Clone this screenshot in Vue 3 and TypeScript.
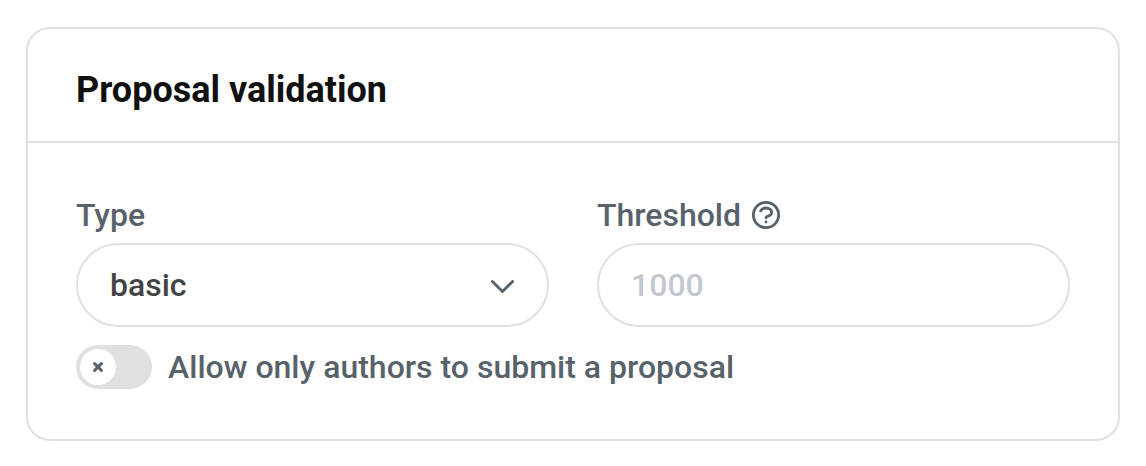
<script setup lang="ts">
import { ref } from 'vue'

const validation = ref('basic')
const threshold = ref('')
const authorsOnly = ref(false)
</script>

<template>
  <main class="page">
    <section class="card">
      <header class="card-header">
        <h1>Proposal validation</h1>
      </header>
      <div class="card-body">
        <div class="fields">
          <div class="field">
            <div class="label-row">
              <label class="label" for="type">Type</label>
            </div>
            <div class="select-wrap">
              <select id="type" v-model="validation" class="control">
                <option value="basic">basic</option>
              </select>
              <svg class="chevron" viewBox="4 8 16 9" aria-hidden="true">
                <path d="M19 9l-7 7-7-7" />
              </svg>
            </div>
          </div>
          <div class="field">
            <div class="label-row">
              <label class="label" for="threshold">Threshold</label>
              <svg class="help" viewBox="1.3 1.3 21.4 21.4" aria-hidden="true">
                <path
                  d="M8.228 9c.549-1.165 2.03-2 3.772-2 2.21 0 4 1.343 4 3 0 1.4-1.278 2.575-3.006 2.907-.542.104-.994.54-.994 1.093m0 3h.01M21 12a9 9 0 11-18 0 9 9 0 0118 0z"
                />
              </svg>
            </div>
            <input id="threshold" v-model="threshold" class="control" type="text" placeholder="1000" />
          </div>
        </div>
        <label class="toggle">
          <input v-model="authorsOnly" class="toggle-input" type="checkbox" role="switch" />
          <span class="track">
            <span class="knob">
              <svg viewBox="0 0 12 12" aria-hidden="true"><path d="M2.6 2.6l6.8 6.8M9.4 2.6l-6.8 6.8" /></svg>
            </span>
          </span>
          <span class="toggle-text">Allow only authors to submit a proposal</span>
        </label>
      </div>
    </section>
  </main>
</template>

<style>
body {
  background: #fff;
}
</style>

<style scoped>
* {
  box-sizing: border-box;
}
.page {
  padding: 27px 26px 25px;
  font-family: Roboto, 'Liberation Sans', sans-serif;
  color: #58626b;
}
.card {
  border: 2px solid #e0e0e0;
  border-radius: 24px;
}
.card-header {
  padding: 37px 48px 27px;
  border-bottom: 2px solid #e0e0e0;
}
h1 {
  margin: 0;
  font-size: 36px;
  line-height: 48px;
  font-weight: 700;
  color: #111;
}
.card-body {
  padding: 48px 48px 50px;
}
.fields {
  display: grid;
  grid-template-columns: 1fr 1fr;
  gap: 48px;
}
.label-row {
  display: flex;
  align-items: center;
  gap: 10px;
  padding-bottom: 4px;
}
.label {
  font-size: 32px;
  line-height: 48px;
  font-weight: 500;
}
.help {
  width: 30px;
  height: 30px;
  fill: none;
  stroke: currentColor;
  stroke-width: 2;
  stroke-linecap: round;
  stroke-linejoin: round;
}
.select-wrap {
  position: relative;
}
.control {
  display: block;
  width: 100%;
  height: 84px;
  margin: 0;
  padding: 0 32px;
  border: 2px solid #e0e0e0;
  border-radius: 42px;
  background: transparent;
  font: inherit;
  font-size: 32px;
  font-weight: 500;
  color: #444;
  appearance: none;
  outline: none;
}
.control:focus-visible {
  border-color: #58626b;
}
.control::placeholder {
  color: #c5c7ce;
  opacity: 1;
}
.chevron {
  position: absolute;
  right: 35px;
  top: 37px;
  width: 23px;
  height: 13px;
  fill: none;
  stroke: currentColor;
  stroke-width: 2;
  stroke-linecap: round;
  stroke-linejoin: round;
  pointer-events: none;
}
.toggle {
  position: relative;
  display: flex;
  align-items: center;
  gap: 16px;
  margin-top: 18px;
  cursor: pointer;
}
.toggle-input {
  position: absolute;
  width: 76px;
  height: 44px;
  margin: 0;
  opacity: 0;
}
.track {
  flex: none;
  width: 76px;
  height: 44px;
  padding: 4px;
  border-radius: 22px;
  background: #e0e0e0;
}
.knob {
  display: flex;
  align-items: center;
  justify-content: center;
  width: 36px;
  height: 36px;
  border-radius: 50%;
  background: #fff;
  transition: transform 0.2s;
}
.toggle-input:checked + .track {
  background: #384aff;
}
.toggle-input:checked + .track .knob {
  transform: translateX(32px);
}
.knob svg {
  width: 12px;
  height: 12px;
  fill: none;
  stroke: currentColor;
  stroke-width: 3;
  stroke-linecap: round;
}
.toggle-text {
  font-size: 32px;
  line-height: 44px;
  font-weight: 500;
}
</style>
